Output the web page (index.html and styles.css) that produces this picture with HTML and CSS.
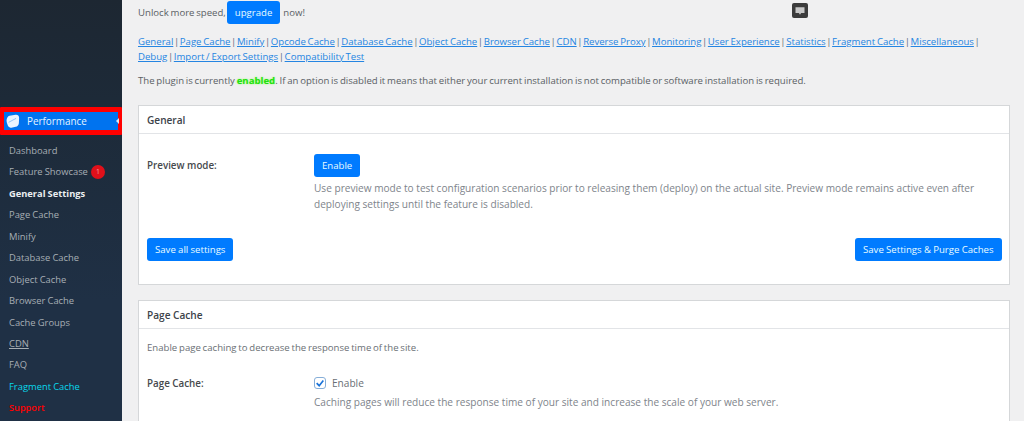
FILE: index.html
```html
<!DOCTYPE html>
<html lang="en">
<head>
<meta charset="utf-8">
<title>Performance - General Settings</title>
<link rel="stylesheet" href="styles.css">
</head>
<body>
<div class="page">
  <aside class="sidebar">
    <div class="perf-frame">
      <div class="perf-item">
        <svg class="perf-icon" viewBox="0 0 16 16" width="14" height="14"><path d="M4 2 11 .9c2.300-.3 4 1.200 4 3.300l-.3 6.300c-.1 2-1.500 3.700-3.600 4.200l-3.600.8c-2.100.4-4.100-.3-5.300-2.200L1 10C.4 7.500.6 5.900 1.300 4.500 1.900 3.200 2.800 2.200 4 2Z" fill="#eaf4ff"/><path d="M3 9.500 11.500 5" stroke="#8fc2f5" stroke-width="1.100"/></svg>
        <span>Performance</span>
        <span class="perf-notch"></span>
      </div>
    </div>
    <nav class="side-menu">
      <a class="side-link">Dashboard</a>
      <a class="side-link">Feature Showcase <span class="badge">1</span></a>
      <a class="side-link current">General Settings</a>
      <a class="side-link">Page Cache</a>
      <a class="side-link">Minify</a>
      <a class="side-link">Database Cache</a>
      <a class="side-link">Object Cache</a>
      <a class="side-link">Browser Cache</a>
      <a class="side-link">Cache Groups</a>
      <a class="side-link"><span class="underlined">CDN</span></a>
      <a class="side-link">FAQ</a>
      <a class="side-link cyan">Fragment Cache</a>
      <a class="side-link red">Support</a>
    </nav>
  </aside>
  <main class="content">
    <div class="upgrade-row">
      <span class="unlock">Unlock more speed,</span><a class="btn">upgrade</a><span class="now">now!</span>
      <span class="chat-icon"><svg viewBox="0 0 16 16" width="12" height="12"><path d="M2 3h12v7.500H9.500L8 13 6.500 10.500H2Z" fill="#c8c8c8"/></svg></span>
    </div>
    <p class="tabs">
      <a>General</a> | <a>Page Cache</a> | <a>Minify</a> | <a>Opcode Cache</a> | <a>Database Cache</a> | <a>Object Cache</a> | <a>Browser Cache</a> | <a>CDN</a> | <a>Reverse Proxy</a> | <a>Monitoring</a> | <a>User Experience</a> | <a>Statistics</a> | <a>Fragment Cache</a> | <a>Miscellaneous</a> |<br>
      <a>Debug</a> | <a>Import / Export Settings</a> | <a>Compatibility Test</a>
    </p>
    <p class="status">The plugin is currently <b class="enabled">enabled</b>. If an option is disabled it means that either your current installation is not compatible or software installation is required.</p>

    <section class="card card-general">
      <h2 class="card-title">General</h2>
      <div class="card-body">
        <div class="field">
          <div class="field-label">Preview mode:</div>
          <div class="field-value">
            <a class="btn">Enable</a>
            <p class="desc">Use preview mode to test configuration scenarios prior to releasing them (deploy) on the actual site. Preview mode remains active even after deploying settings until the feature is disabled.</p>
          </div>
        </div>
        <div class="actions">
          <a class="btn">Save all settings</a>
          <a class="btn">Save Settings &amp; Purge Caches</a>
        </div>
      </div>
    </section>

    <section class="card card-page">
      <h2 class="card-title">Page Cache</h2>
      <div class="card-body">
        <p class="intro">Enable page caching to decrease the response time of the site.</p>
        <div class="field field-check">
          <div class="field-label">Page Cache:</div>
          <div class="field-value">
            <label class="check"><span class="checkbox"><svg viewBox="0 0 12 12" width="10" height="10"><path d="M2 6.200 5 9.200 10 3" fill="none" stroke="#1a73d9" stroke-width="2"/></svg></span>Enable</label>
            <p class="desc">Caching pages will reduce the response time of your site and increase the scale of your web server.</p>
          </div>
        </div>
      </div>
    </section>
  </main>
</div>
</body>
</html>
```
FILE: styles.css
```css
* { box-sizing: border-box; }
html, body { margin: 0; height: 421px; overflow: hidden; }
body { background: #f0f0f1; color: #50575e; font-family: "Open Sans", "Noto Sans", sans-serif; font-size: 9.6px; line-height: 14px; }
.page { display: flex; height: 421px; overflow: hidden; }

.sidebar { width: 122px; flex: none; height: 421px; background: linear-gradient(#1d2732 0, #1d2a38 100px, #1f3045 300px); padding-top: 107px; }
.perf-frame { width: 122px; height: 28px; border: 4px solid #f00; border-width: 5px 4px; background: #0073ef; border-radius: 1px; }
.perf-item { display: flex; align-items: center; height: 18px; padding-left: 2px; gap: 7px; color: #e6f5ff; font-size: 9.900px; position: relative; }
.perf-icon { flex: none; }
.perf-notch { position: absolute; right: -1px; top: 6px; width: 0; height: 0; border: 3px solid transparent; border-right-color: #dfe8f0; border-left-width: 0; }
.side-menu { display: flex; flex-direction: column; padding-top: 5.300px; }
.side-link { display: flex; align-items: center; height: 21.450px; padding-left: 9px; color: #a7aeb4; font-size: 9.400px; white-space: pre; word-spacing: -.3px; }
.side-link.current { color: #eceff1; font-weight: 700; font-size: 9.300px; }
.side-link.cyan { color: #08d8ec; font-weight: 500; }
.side-link.red { color: #f00; font-weight: 600; font-size: 9.200px; }
.underlined { text-decoration: underline; }
.badge { display: inline-flex; align-items: center; justify-content: center; width: 14px; height: 14px; margin-left: 1px; border-radius: 50%; background: #e0101a; color: #f0a0a0; font-size: 7px; }

.content { flex: 1; padding: 0 14px 0 16px; min-width: 0; }
.upgrade-row { display: flex; align-items: center; height: 25px; position: relative; color: #5a5f65; word-spacing: -.7px; }
.unlock { margin-right: 1px; }
.now { margin-left: 3px; }
.btn { display: inline-flex; align-items: center; height: 23px; padding: 0 8px; background: #007bff; color: #e8fbff; border-radius: 3px; font-size: 9.6px; word-spacing: -.2px; }
.chat-icon { position: absolute; left: 654px; top: 3px; width: 16px; height: 15px; border-radius: 2px; background: #3c3c3c; display: flex; align-items: center; justify-content: center; }

.tabs { margin: 10px 0 0; line-height: 14.500px; color: #5a6a7a; white-space: nowrap; word-spacing: -1.900px; }
.tabs a { color: #2585e2; text-decoration: underline; word-spacing: -.7px; }
.status { margin: 10px 0 0; color: #5a5f65; word-spacing: -.7px; }
.enabled { color: #1fe010; text-shadow: 0 0 2px #8dff5a; }

.card { background: #fff; border: 1px solid #d5d7d9; margin-top: 17px; }
.card-general { height: 180px; }
.card-page { margin-top: 15px; height: 140px; }
.card-title { margin: 0; padding: 0 8px; height: 28px; line-height: 28px; font-size: 10.100px; font-weight: 600; color: #3c434a; border-bottom: 1px solid #e2e4e7; }
.card-body { padding: 0 7.500px 0 8px; }
.field { display: flex; padding-top: 20px; }
.field-label { width: 167px; flex: none; font-weight: 600; color: #46494d; padding-top: 5px; font-size: 9.800px; }
.field-value { flex: 1; }
.desc { margin: 3px 0 0; color: #7e848b; line-height: 16px; font-size: 10.100px; }
.actions { display: flex; justify-content: space-between; margin-top: 26px; }
.intro { margin: 12px 0 0; color: #6a6f75; word-spacing: -.7px; }
.field-check { padding-top: 21px; }
.field-check .field-label { padding-top: 1px; }
.check { display: flex; align-items: center; gap: 6px; color: #6a6f75; height: 14px; font-size: 10.100px; }
.check + .desc { margin-top: 4px; }
.checkbox { width: 12px; height: 12px; border: 1px solid #86aed8; border-radius: 3px; background: #fff; display: flex; align-items: center; justify-content: center; }
```
